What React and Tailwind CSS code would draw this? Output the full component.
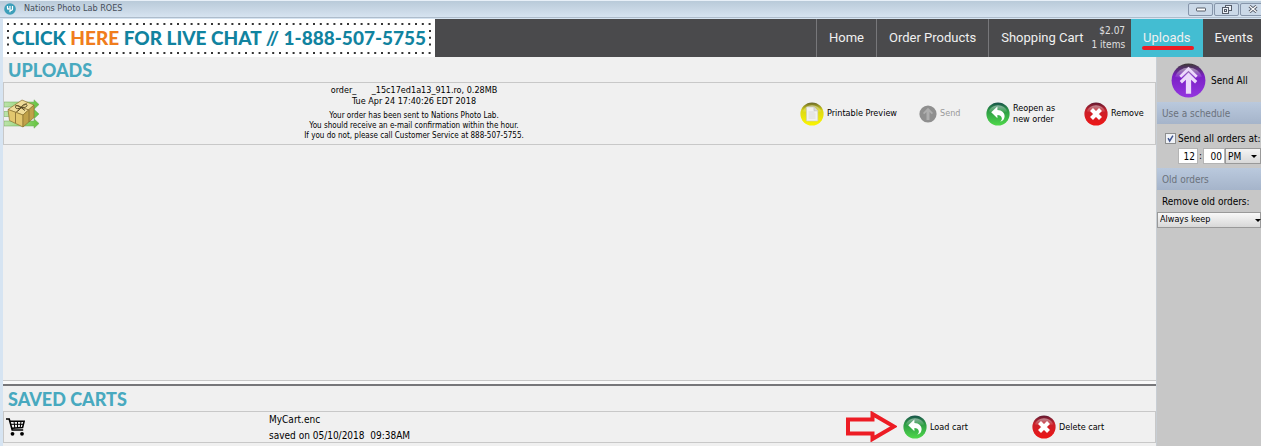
import { useState } from 'react';

const NAV_CELL = "flex items-center h-full pl-3 font-['Roboto'] text-[13px] text-[#f0f0f0]";

function Ball({ id, top, bottom, rim, className, children }) {
    return (
        <svg viewBox="0 0 24 24" className={className} aria-hidden="true">
            <defs>
                <linearGradient id={id} x1="0" y1="0" x2="0" y2="1">
                    <stop offset="0" stopColor={rim} />
                    <stop offset="0.35" stopColor={top} />
                    <stop offset="1" stopColor={bottom} />
                </linearGradient>
                <linearGradient id={`${id}-shine`} x1="0" y1="0" x2="0" y2="1">
                    <stop offset="0" stopColor="#fff" stopOpacity="0.5" />
                    <stop offset="1" stopColor="#fff" stopOpacity="0.02" />
                </linearGradient>
            </defs>
            <circle cx="12" cy="12" r="11.6" fill={`url(#${id})`} />
            <path d="M2.800 9.500a9.400 8 0 0 1 18.400 0c-5 1.500-13.400 1.500-18.400 0Z" fill={`url(#${id}-shine)`} />
            {children}
        </svg>
    );
}

function BackIcon({ id }) {
    return (
        <Ball id={id} top="#2c9a45" bottom="#4fd84a" rim="#17504a" className="size-6 shrink-0">
            <path d="M5.2 10.2 11.4 4.6v3.3c4.6.2 7.4 2.9 7.2 6.6-.1 2.7-1.8 4.6-4.6 5.3 1.5-1.1 2.1-2.4 1.8-3.9-.4-1.800-2-2.800-4.400-2.900v3.200Z" fill="#fff" />
        </Ball>
    );
}

function CrossIcon({ id }) {
    return (
        <Ball id={id} top="#c9202a" bottom="#ee1616" rim="#5f1b33" className="size-6 shrink-0">
            <path d="m7.500 7.500 9 9m0-9-9 9" stroke="#fff" strokeWidth="4.200" />
        </Ball>
    );
}

function PreviewIcon() {
    return (
        <Ball id="preview" top="#dcd816" bottom="#fbf500" rim="#66642c" className="size-6 shrink-0">
            <path d="M6.500 5h7.500l3.800 3.800V19H6.500Z" fill="#f1f1f1" stroke="#c9c9c0" strokeWidth="0.6" />
            <path d="M14 5v3.800h3.800" fill="#ddd" stroke="#bbb" strokeWidth="0.6" />
            <path d="M8.500 10h6M8.500 12h7M8.500 14h7M8.500 16h7" stroke="#d5d5d5" strokeWidth="0.8" />
        </Ball>
    );
}

function SendIcon() {
    return (
        <svg viewBox="0 0 18 18" className="size-[18px] shrink-0" aria-hidden="true">
            <circle cx="9" cy="9" r="8.600" fill="#8f8f8f" />
            <path d="M9 2.800 14 8l-1.200 1.200-2.300-2.100v8h-3v-8L5.200 9.200 4 8Z" fill="#aeaeae" />
        </svg>
    );
}

function SendAllIcon() {
    return (
        <Ball id="send-all" top="#7a1fc4" bottom="#9436e0" rim="#3d3a35" className="size-[35px] shrink-0">
            <path d="M12 2.600 18.300 8.800l-1.300 1.300L12 5.300l-5 4.800-1.300-1.300Z" fill="#ecd9fb" />
            <path d="m12 6.500 6 5.900-1.500 1.600-2.700-2.500V21h-3.600v-9.500L7.500 14 6 12.400Z" fill="#ecd9fb" />
        </Ball>
    );
}

function PackageIcon() {
    return (
        <svg viewBox="0 0 36 30" className="w-9 h-[30px]" aria-hidden="true">
            <defs>
                <linearGradient id="trail" gradientUnits="userSpaceOnUse" x1="0" x2="36" y1="0" y2="0">
                    <stop offset="0" stopColor="#8ad567" stopOpacity="0.5" />
                    <stop offset="1" stopColor="#5fc23a" />
                </linearGradient>
            </defs>
            <g fill="url(#trail)" stroke="#6fa85a" strokeWidth="0.5">
                <path d="M0 3h30V.800l5 4.700-5 4.700V8H0Z" />
                <path d="M0 12.500h30v-2.200l5 4.700-5 4.700v-2.200H0Z" />
                <path d="M0 22h30v-2.200l5 4.700-5 4.700V27H0Z" />
            </g>
            <g stroke="#8d7330" strokeWidth="0.7" strokeLinejoin="round">
                <path d="m4 10.500 14-9.500 12 5L19 16Z" fill="#efdc98" />
                <path d="m4 10.500 15 5.500v12L5.500 21.500Z" fill="#e2c76e" />
                <path d="M19 16 30 6v12.500L19 28Z" fill="#c0a149" />
            </g>
            <path d="m11.500 13.500 12-10M11.500 13.500v10.500M11 6l14 5v12" fill="none" stroke="#8a7235" strokeWidth="0.9" />
            <path d="M17 8.500c-3-3-6-2-5.500 0 .5 1.500 3 1.500 5.500 0Zm0 0c2-4 6-4 6-2 0 1.500-3 2.500-6 2Zm0 0-3.500 4m3.500-4 4 3" fill="none" stroke="#4f4220" strokeWidth="1" />
        </svg>
    );
}

function CartIcon() {
    return (
        <svg viewBox="0 0 19 18" className="w-[19px] h-[18px]" fill="none" stroke="#000" aria-hidden="true">
            <path d="M0 1h3.200l3 11h11" strokeWidth="1.600" />
            <path d="M4 3.200h14.200L16.600 9.500 6 10.200" strokeWidth="1.500" />
            <path d="M4.500 6.300h13M8 3l.8 7M11.500 3v7M15 3l-.8 7" strokeWidth="1" />
            <circle cx="6.500" cy="15.800" r="1.900" fill="#000" stroke="none" />
            <circle cx="16" cy="15.800" r="1.900" fill="#000" stroke="none" />
        </svg>
    );
}

function WindowButton({ label, children }) {
    return (
        <button aria-label={label} className="flex items-center justify-center w-[25px] h-[13px] rounded-xs border border-[#8796ab] bg-[#cbd9e8]">
            {children}
        </button>
    );
}

function TitleBar() {
    return (
        <header className="flex items-center h-[18px] pl-1 border-t border-b border-t-[#e8f0f8] border-b-[#aebccb] bg-linear-to-b from-[#b9cad9] to-[#d6e3f0]">
            <svg viewBox="0 0 12 12" className="size-3 mr-2" aria-hidden="true">
                <circle cx="6" cy="6" r="5.800" fill="#3d9fba" />
                <path d="M3.500 3v2.200c0 1.200 1.200 1.200 1.200 0M6 3v6.300M8.500 3v3c0 1.300-1.300 1.500-2.500 1.500" fill="none" stroke="#fff" strokeWidth="1.200" />
            </svg>
            <h1 className="grow text-[9px] text-[#454d58]">Nations Photo Lab ROES</h1>
            <div className="flex gap-px -mr-1">
                <WindowButton label="Minimize">
                    <svg viewBox="0 0 10 5" className="w-[10px] h-[5px]"><rect x="0.500" y="1" width="9" height="3" rx="0.500" fill="#fff" stroke="#555c69" /></svg>
                </WindowButton>
                <WindowButton label="Restore">
                    <svg viewBox="0 0 10 9" className="w-[10px] h-[9px]" fill="#eef2f7" stroke="#555c69">
                        <rect x="3.500" y="0.500" width="6" height="5" />
                        <rect x="0.500" y="2.500" width="6" height="6" />
                        <rect x="2.500" y="4.500" width="2" height="2" />
                    </svg>
                </WindowButton>
                <WindowButton label="Close">
                    <svg viewBox="0 0 10 8" className="w-[10px] h-2"><path d="m1.500 1 7 6m0-6-7 6" stroke="#555c69" strokeWidth="3" /><path d="m1.500 1 7 6m0-6-7 6" stroke="#fff" strokeWidth="1.200" /></svg>
                </WindowButton>
            </div>
        </header>
    );
}

function Banner() {
    return (
        <a href="#chat" className="relative flex items-center justify-center w-[432px] h-full bg-white font-['Lato',sans-serif] font-black text-[19px] text-[#11839f] whitespace-nowrap">
            <svg viewBox="0 0 432 38" className="absolute inset-0 size-full" stroke="#333" strokeWidth="2" strokeDasharray="2 4.800" aria-hidden="true">
                <path d="M4 5h424M4 34h424M5 11v19M427 11v19" />
            </svg>
            <span>CLICK <span className="text-[#f07d1d]">HERE</span> FOR LIVE CHAT // 1-888-507-5755</span>
        </a>
    );
}

function NavBar() {
    return (
        <nav className="flex items-center justify-between h-[38px] bg-[#4a4a4c]">
            <Banner />
            <div className="flex h-full whitespace-nowrap">
                <a href="#home" className={`${NAV_CELL} pr-3 border-l border-[#77777a]`}>Home</a>
                <a href="#products" className={`${NAV_CELL} pr-3 border-l border-[#77777a]`}>Order Products</a>
                <a href="#cart" className={`${NAV_CELL} pr-[6px] gap-2 border-l border-[#77777a]`}>
                    Shopping Cart
                    <span className="font-['DejaVu_Sans_Condensed'] text-[10px] leading-[14px] text-right text-[#e0e0e0]">$2.07<br />1 items</span>
                </a>
                <a href="#uploads" aria-current="page" className={`${NAV_CELL} pr-3 relative bg-[#43bdd2]`}>
                    Uploads
                    <span className="absolute left-[11px] right-[9px] bottom-[7px] h-1 rounded-full bg-[#ed1c24]" />
                </a>
                <a href="#events" className={`${NAV_CELL} pr-2`}>Events</a>
            </div>
        </nav>
    );
}

function Action({ icon, children, disabled }) {
    return (
        <button disabled={disabled} className="flex items-center gap-[3px] text-left text-[9px] leading-[11px] text-black disabled:text-[#999]">
            {icon}
            {children}
        </button>
    );
}

function SectionTitle({ children }) {
    return <h2 className="h-[25px] pl-[5px] font-['Lato',sans-serif] font-black text-[18px] leading-[26px] text-[#48a9bf]">{children}</h2>;
}

function Sidebar() {
    const [scheduled, setScheduled] = useState(true);

    return (
        <aside className="w-[104px] shrink-0 bg-[#c7c7c7] text-[10px] whitespace-nowrap">
            <button className="flex items-center gap-[5px] h-[47px] pl-[14px]">
                <SendAllIcon />
                Send All
            </button>
            <h3 className="h-[22px] -mt-[2px] pl-[5px] leading-6 text-[#6b727c] bg-linear-to-b from-[#bac9dd] to-[#a5b4ca]">Use a schedule</h3>
            <div className="h-11 pt-2">
                <label className="flex items-center gap-[2px] h-3 pl-2">
                    <input
                        type="checkbox"
                        checked={scheduled}
                        onChange={(e) => setScheduled(e.target.checked)}
                        className="peer sr-only"
                    />
                    <svg viewBox="0 0 11 11" className="size-[11px] border border-[#8e8f8f] bg-[#f0f3f8] *:invisible peer-checked:*:visible" aria-hidden="true">
                        <path d="m2.500 5 2 3.500L8.500 2" fill="none" stroke="#40558f" strokeWidth="1.800" />
                    </svg>
                    Send all orders at:
                </label>
                <div className="flex items-center h-4 mt-1 pl-[21px]">
                    <input aria-label="Hour" defaultValue="12" className="w-5 h-4 pr-[2px] text-right bg-white border border-[#b4b4b4]" />
                    <span className="w-[5px] text-center leading-3">:</span>
                    <input aria-label="Minute" defaultValue="00" className="w-[22px] h-4 pr-[2px] text-right bg-white border border-[#b4b4b4]" />
                    <div className="relative grow">
                        <select aria-label="AM or PM" className="w-full h-4 pl-[2px] appearance-none border border-[#999] bg-linear-to-b from-[#f4f4f4] to-[#d8d8d8]">
                            <option>PM</option>
                            <option>AM</option>
                        </select>
                        <svg viewBox="0 0 6 3" className="absolute right-1 top-[7px] w-[6px] h-[3px] pointer-events-none"><path d="M0 0h6L3 3Z" /></svg>
                    </div>
                </div>
            </div>
            <h3 className="h-[22px] pl-[5px] leading-6 text-[#6b727c] bg-linear-to-b from-[#bac9dd] to-[#a5b4ca]">Old orders</h3>
            <label htmlFor="keep" className="block h-[22px] pl-[5px] leading-6">Remove old orders:</label>
            <div className="relative">
                <select id="keep" className="block w-full h-4 pl-[2px] text-[9px] appearance-none border border-[#999] bg-linear-to-b from-[#f8f8f8] to-[#d8d8d8]">
                    <option>Always keep</option>
                </select>
                <svg viewBox="0 0 6 3" className="absolute right-0 top-[7px] w-[6px] h-[3px] pointer-events-none"><path d="M0 0h6L3 3Z" /></svg>
            </div>
        </aside>
    );
}

export default function App() {
    return (
        <div className="flex flex-col min-h-screen overflow-x-hidden bg-[#d6e4f2] font-['DejaVu_Sans_Condensed','Noto_Sans',sans-serif] text-black">
            <TitleBar />
            <div className="flex flex-col grow ml-[3px] mt-px bg-[#f0f0f0]">
                <NavBar />
                <div className="flex grow">
                    <main className="flex flex-col grow border-r border-[#c8ced4]">
                        <section className="grow">
                            <SectionTitle>UPLOADS</SectionTitle>
                            <article className="flex items-center h-[63px] border border-[#c8c8c8]">
                                <PackageIcon />
                                <div className="grow pb-[2px] text-center text-[9px] leading-[11px]">
                                    <p className="whitespace-pre">order_      _15c17ed1a13_911.ro, 0.28MB</p>
                                    <p>Tue Apr 24 17:40:26 EDT 2018</p>
                                    <p className="mt-1 text-[8px] leading-[10px]">
                                        Your order has been sent to Nations Photo Lab.<br />
                                        You should receive an e-mail confirmation within the hour.<br />
                                        If you do not, please call Customer Service at 888-507-5755.
                                    </p>
                                </div>
                                <div className="grid grid-cols-[119px_67px_98px_71px] pl-3">
                                    <Action icon={<PreviewIcon />}>Printable Preview</Action>
                                    <Action icon={<SendIcon />} disabled>Send</Action>
                                    <Action icon={<BackIcon id="reopen" />}><span>Reopen as<br />new order</span></Action>
                                    <Action icon={<CrossIcon id="remove" />}>Remove</Action>
                                </div>
                            </article>
                        </section>
                        <section className="pb-[3px]">
                            <div className="h-[6px] border-t border-t-[#c8c8c8] border-b-2 border-b-[#77777a] bg-[#fafafa]" />
                            <SectionTitle>SAVED CARTS</SectionTitle>
                            <article className="flex items-center justify-between h-8 border border-[#c8c8c8]">
                                <div className="flex items-center">
                                    <div className="w-[265px] pl-[2px]"><CartIcon /></div>
                                    <div className="pt-[2px] text-[10px] leading-4">
                                        <p>MyCart.enc</p>
                                        <p className="whitespace-pre">saved on 05/10/2018  09:38AM</p>
                                    </div>
                                </div>
                                <div className="grid grid-cols-[129px_123px]">
                                    <div className="relative">
                                        <Action icon={<BackIcon id="load" />}>Load cart</Action>
                                        <svg viewBox="0 0 51 31" className="absolute right-full -top-1 mr-[6px] w-[51px] h-[31px]" aria-hidden="true">
                                            <path d="M2 8.500h24.500V3L48 15.500 26.500 28v-5.500H2Z" fill="none" stroke="#ed1c24" strokeWidth="4" />
                                        </svg>
                                    </div>
                                    <Action icon={<CrossIcon id="delete" />}>Delete cart</Action>
                                </div>
                            </article>
                        </section>
                    </main>
                    <Sidebar />
                </div>
            </div>
        </div>
    );
}
